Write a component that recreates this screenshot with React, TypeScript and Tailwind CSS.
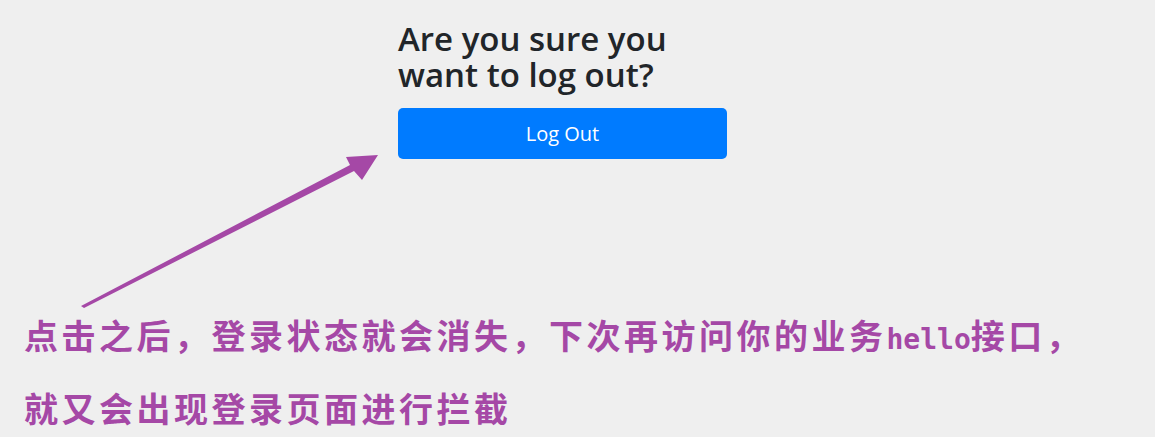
export default function App() {
  return (
    <div className="relative w-[1155px] h-[437px] overflow-hidden bg-[#efefef]">
      <div className="pl-[398px] pt-[21px] font-['Open_Sans','Noto_Sans',sans-serif]">
        <h2 className="w-[329px] text-[33px] leading-[36px] font-semibold text-[#212529]">
          Are you sure you want to log out?
        </h2>
        <button className="mt-[15px] w-[329px] h-[51px] rounded-[5px] bg-[#007bff] text-white text-[20px]">
          Log Out
        </button>
      </div>

      <div className="mt-[156px] pl-[24px] flex flex-col gap-[28px] text-[34px] leading-[40px] font-bold tracking-[3.5px] text-[#a548a6] whitespace-nowrap font-['Noto_Sans_CJK_SC',sans-serif]">
        <p>
          点击之后，登录状态就会消失，下次再访问你的业务
          <span className="text-[28px] tracking-normal font-['DejaVu_Sans_Mono',monospace]">hello</span>
          接口，
        </p>
        <p>就又会出现登录页面进行拦截</p>
      </div>

      {/* annotation arrow */}
      <svg className="absolute left-0 top-0" width="1155" height="437" viewBox="0 0 1155 437">
        <polygon points="81,306 350,165 346,157 378,155 362,180 354,171 84,308" fill="#a548a6" />
      </svg>
    </div>
  );
}
